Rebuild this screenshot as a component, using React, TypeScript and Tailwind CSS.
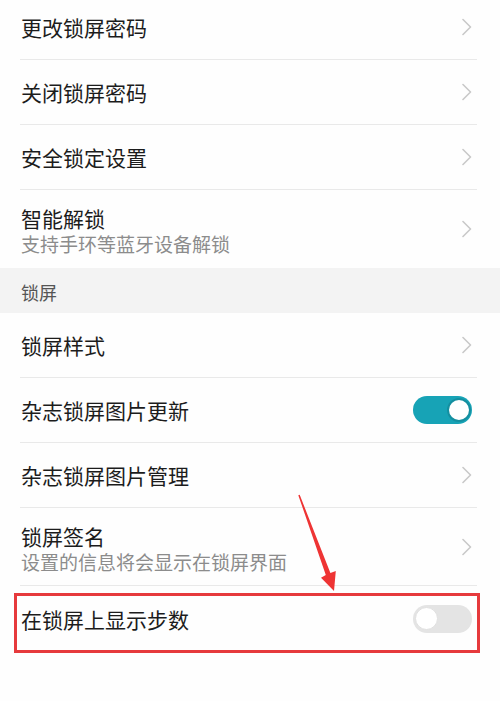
import React from "react";

const font = { fontFamily: '"Noto Sans CJK SC", "Noto Sans", sans-serif' };

function Chevron() {
  return (
    <svg width="10" height="18" viewBox="0 0 10 18" className="shrink-0">
      <path d="M1 1.5 L8.5 9 L1 16.5" fill="none" stroke="#c9c9c9" strokeWidth="1.6" strokeLinecap="round" strokeLinejoin="round" />
    </svg>
  );
}

function Toggle({ on }: { on: boolean }) {
  return on ? (
    <div className="w-[59px] h-[28px] rounded-full bg-[#17a3b6] flex items-center justify-end pr-[1px] shrink-0">
      <div className="w-[24px] h-[24px] rounded-full bg-white border-[2px] border-[#148fa0]" />
    </div>
  ) : (
    <div className="w-[59px] h-[28px] rounded-full bg-[#e4e4e4] flex items-center justify-start pl-[2px] shrink-0">
      <div className="w-[23px] h-[23px] rounded-full bg-white border border-[#e0e0e0]" />
    </div>
  );
}

function Row({
  title,
  sub,
  right,
  divider = true,
}: {
  title: string;
  sub?: string;
  right: React.ReactNode;
  divider?: boolean;
}) {
  return (
    <div
      className={
        "ml-[20px] mr-[23px] flex items-center justify-between pl-[1px] pr-[5px] " +
        (sub ? "h-[78px] " : "h-[65px] ") +
        (divider ? "border-b border-[#e9e9e9]" : "")
      }
    >
      {sub ? (
        <div className="flex flex-col pt-[4px] gap-[2px]">
          <div className="text-[21px] leading-[24px] text-[#1c1c1c]">{title}</div>
          <div className="text-[19px] leading-[24px] text-[#8c8c8c]">{sub}</div>
        </div>
      ) : (
        <div className="text-[21px] leading-[26px] text-[#1c1c1c]">{title}</div>
      )}
      {right}
    </div>
  );
}

export default function App() {
  return (
    <div className="relative w-[500px] h-[701px] overflow-hidden bg-[#fefefe]" style={font}>
      <div className="-mt-[5px]">
        <Row title="更改锁屏密码" right={<Chevron />} />
        <Row title="关闭锁屏密码" right={<Chevron />} />
        <Row title="安全锁定设置" right={<Chevron />} />
        <Row title="智能解锁" sub="支持手环等蓝牙设备解锁" right={<Chevron />} divider={false} />
        <div className="h-[45px] bg-[#f3f3f3] flex items-center pl-[21px] pt-[3px]">
          <span className="text-[18px] text-[#555555]">锁屏</span>
        </div>
        <Row title="锁屏样式" right={<Chevron />} />
        <Row title="杂志锁屏图片更新" right={<Toggle on />} />
        <Row title="杂志锁屏图片管理" right={<Chevron />} />
        <Row title="锁屏签名" sub="设置的信息将会显示在锁屏界面" right={<Chevron />} />
        <Row title="在锁屏上显示步数" right={<Toggle on={false} />} divider={false} />
      </div>

      <div className="absolute left-[14px] top-[593px] w-[466px] h-[60px] border-[3px] border-[#e63a3c]" />

      <svg className="absolute left-0 top-0" width="500" height="701" viewBox="0 0 500 701">
        <polygon
          points="298.3,495.2 299.7,494.8 330.4,573.1 335.8,571 334,591 321,577.8 325.8,574.9"
          fill="#ee3434"
        />
      </svg>
    </div>
  );
}
